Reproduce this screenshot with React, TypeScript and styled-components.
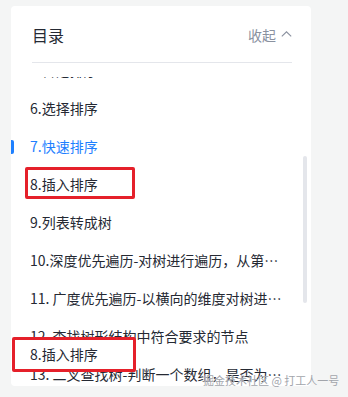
import React, { useEffect, useRef } from 'react'
import styled, { createGlobalStyle } from 'styled-components'

const GlobalStyle = createGlobalStyle`
  html, body {
    margin: 0;
    padding: 0;
    background: #f4f5f5;
    font-family: "Noto Sans CJK SC", "Noto Sans", sans-serif;
  }
`

const items = [
  '1.数组去重',
  '2.数组扁平化',
  '3.深拷贝',
  '4.防抖节流',
  '5.冒泡排序',
  '6.选择排序',
  '7.快速排序',
  '8.插入排序',
  '9.列表转成树',
  '10.深度优先遍历-对树进行遍历，从第一个节点开始，遍历其子节点',
  '11. 广度优先遍历-以横向的维度对树进行遍历',
  '12. 查找树形结构中符合要求的节点',
  '13. 二叉查找树-判断一个数组，是否为某二叉查找树的前序遍历结果',
]

const ACTIVE = 6

export default function App() {
  const listRef = useRef<HTMLUListElement>(null)

  useEffect(() => {
    if (listRef.current) listRef.current.scrollTop = 178
  }, [])

  return (
    <Stage>
      <GlobalStyle />
      <Card>
        <Header>
          <Title>目录</Title>
          <Collapse>
            收起
            <svg width="11" height="6" viewBox="0 0 11 6" fill="none">
              <path d="M0.8 5.4 L5.5 0.8 L10.2 5.4" stroke="#8a919f" strokeWidth="1.1" />
            </svg>
          </Collapse>
        </Header>
        <List ref={listRef}>
          {items.map((text, i) => (
            <Item key={text} $active={i === ACTIVE}>
              {text}
            </Item>
          ))}
        </List>
        <Thumb />
      </Card>
      <Mark />
      <Callout>8.插入排序</Callout>
      <Watermark>掘金技术社区 @ 打工人一号</Watermark>
    </Stage>
  )
}

const Stage = styled.div`
  position: relative;
  width: 348px;
  height: 397px;
  padding: 6px 0 0 11px;
  box-sizing: border-box;
  overflow: hidden;
`

const Card = styled.div`
  position: relative;
  display: flex;
  flex-direction: column;
  width: 300px;
  height: 380px;
  background: #fff;
  border-radius: 4px;
  overflow: hidden;
`

const Header = styled.div`
  flex: none;
  display: flex;
  align-items: center;
  justify-content: space-between;
  height: 57px;
  box-sizing: border-box;
  margin: 0 19px 0 21px;
  padding-top: 2px;
  border-bottom: 1px solid #e4e6eb;
`

const Title = styled.div`
  font-size: 16px;
  line-height: 24px;
  color: #252933;
`

const Collapse = styled.div`
  display: flex;
  align-items: center;
  gap: 5px;
  font-size: 14px;
  line-height: 22px;
  color: #8a919f;

  svg {
    margin-top: -2px;
  }
`

const List = styled.ul`
  flex: 1;
  list-style: none;
  margin: 14px 0 0;
  padding: 0;
  overflow: hidden;
`

const Item = styled.li<{ $active?: boolean }>`
  position: relative;
  height: 38px;
  line-height: 38px;
  padding: 0 28px 0 19px;
  font-size: 14px;
  color: ${p => (p.$active ? '#1e80ff' : '#252933')};
  white-space: nowrap;
  overflow: hidden;
  text-overflow: ellipsis;

  &::before {
    content: '';
    display: ${p => (p.$active ? 'block' : 'none')};
    position: absolute;
    left: 0;
    top: 13px;
    width: 3px;
    height: 14px;
    border-radius: 0 2px 2px 0;
    background: #1e80ff;
  }
`

const Thumb = styled.div`
  position: absolute;
  left: 292px;
  top: 150px;
  width: 4px;
  height: 147px;
  border-radius: 2px;
  background: #e4e6eb;
`

const Mark = styled.div`
  position: absolute;
  left: 25px;
  top: 167px;
  width: 110px;
  height: 32px;
  box-sizing: border-box;
  border: 3px solid #e5202a;
  border-radius: 2px;
`

const Callout = styled.div`
  position: absolute;
  left: 12px;
  top: 337px;
  width: 124px;
  height: 35px;
  box-sizing: border-box;
  border: 3px solid #e5202a;
  border-radius: 2px;
  background: #fff;
  padding-left: 15px;
  font-size: 14px;
  line-height: 29px;
  color: #252933;
`

const Watermark = styled.div`
  position: absolute;
  left: 203px;
  top: 373px;
  font-size: 11px;
  line-height: 14px;
  color: #a2a5ab;
  white-space: nowrap;
  text-shadow: 0 0 1px rgba(255, 255, 255, 0.9);
`
